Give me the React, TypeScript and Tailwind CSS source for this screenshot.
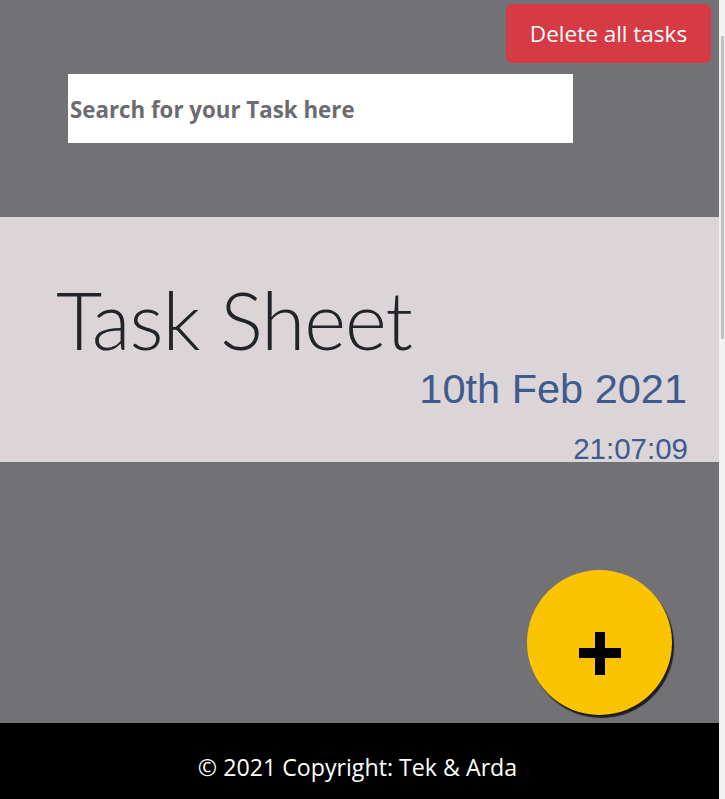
import React from "react";

const sans = "font-['Open_Sans','Noto_Sans',sans-serif]";

export default function App() {
  return (
    <div className="flex w-[725px] h-[799px] overflow-hidden">
      <div className="w-[719px] flex flex-col">
        <header className="h-[217px] bg-[#727176] pt-[4px] flex flex-col">
          <div className="flex justify-end pr-[8px]">
            <button
              className={`${sans} w-[205px] h-[59px] rounded-[6px] bg-[#d63a44] text-white text-[22.5px] flex items-center justify-center`}
            >
              Delete all tasks
            </button>
          </div>
          <div className="mt-[11px] ml-[68px] w-[505px] h-[69px] bg-white flex items-center pl-[2px]">
            <span className={`${sans} font-bold text-[22.3px] text-[#6c6b70] mt-[3px]`}>
              Search for your Task here
            </span>
          </div>
        </header>
        <section className="h-[245px] bg-[#dbd5d7] pt-[62px] flex flex-col">
          <h1
            className="font-['Lato','Open_Sans',sans-serif] font-light text-[80px] leading-none tracking-[-1px] text-[#212529] pl-[56px]"
          >
            Task Sheet
          </h1>
          <div className="mt-[9px] pr-[32px] text-right font-['Liberation_Sans',Arial,sans-serif] text-[41.5px] leading-none text-[#3f5a8f]">
            10th Feb 2021
          </div>
          <div className="mt-[24px] pr-[31px] text-right font-['Liberation_Sans',Arial,sans-serif] text-[29.5px] leading-none text-[#3f5a8f]">
            21:07:09
          </div>
        </section>
        <section className="h-[261px] bg-[#727176] flex justify-end pr-[47px] pt-[108px]">
          <div className="w-[145px] h-[145px] rounded-full bg-[#fbc300] shadow-[2px_3px_1px_rgba(20,20,20,0.9)] flex items-center justify-center">
            <div className="relative w-[42px] h-[43px] translate-y-[11px]">
              <div className="absolute left-[16px] top-0 w-[10px] h-[43px] bg-black" />
              <div className="absolute left-0 top-[16px] w-[42px] h-[10px] bg-black" />
            </div>
          </div>
        </section>
        <footer className="h-[76px] bg-black flex items-center justify-center pt-[12px] pr-[4px]">
          <span className={`${sans} text-white text-[23.2px]`}>
            © 2021 Copyright: Tek &amp; Arda
          </span>
        </footer>
      </div>
      <div className="w-[6px] h-[799px] bg-[#f1f1f1] pt-[36px] pl-[2px]">
        <div className="w-[3px] h-[303px] bg-[#c1c1c1]" />
      </div>
    </div>
  );
}
